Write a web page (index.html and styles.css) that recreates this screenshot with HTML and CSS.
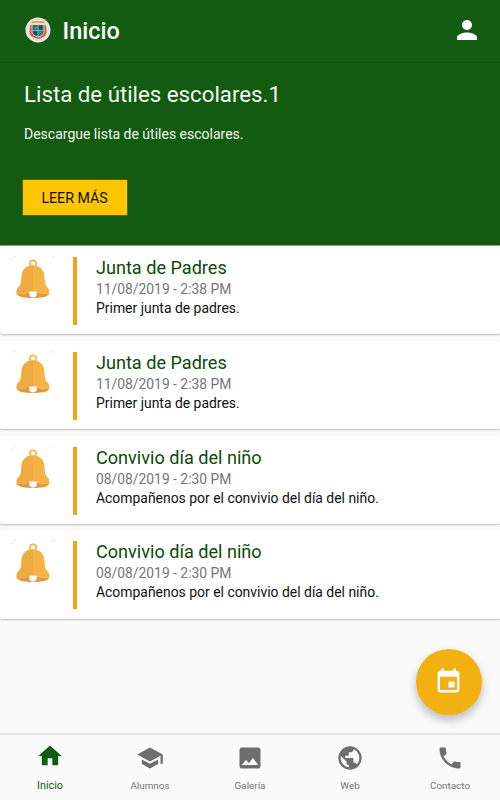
FILE: index.html
```html
<!DOCTYPE html>
<html lang="es">
<head>
    <meta charset="UTF-8">
    <meta name="viewport" content="width=device-width, initial-scale=1.0">
    <title>Inicio</title>
    <link rel="stylesheet" href="styles.css">
</head>
<body>
    <svg class="symbols" aria-hidden="true">
        <symbol id="bell" viewBox="-6 -4 44 44">
            <path d="M-6 1.500l3-2.500M-2.500-2.500h2.500M35.500-2.500h2v1.500" fill="none" stroke="#ececec" stroke-width="1"/>
            <circle cx="17" cy="4.500" r="3.100" fill="none" stroke="#f2b84a" stroke-width="1.700"/>
            <path d="M1 35.500C5 33.500 29 33.500 33 35.500C30 40.200 4 40.200 1 35.500Z" fill="#e8963b"/>
            <path d="M17 6.500C10 6.500 6 11 5.600 17C5.100 24 5.200 26 1.800 29C.5 30.500.3 34 1 35.800C5 33 29 33 33 35.800C33.700 34 33.500 30.500 32.200 29C28.800 26 28.900 24 28.400 17C28 11 24 6.500 17 6.500Z" fill="#f5b345"/>
            <path d="M17 6.500C10 6.500 6 11 5.600 17C5.100 24 5.200 26 1.800 29C.5 30.500.3 34 1 35.800C5 34.200 11 33.700 17 33.700Z" fill="#f0ab40"/>
            <path d="M13.300 32.600h7.400v2.400a3.700 3.500 0 0 1-7.400 0z" fill="#fff"/>
        </symbol>
    </svg>

    <header class="toolbar">
        <svg class="logo" viewBox="0 0 26 26">
            <circle cx="13" cy="13" r="12.500" fill="#e9ebe7"/>
            <circle cx="13" cy="13" r="10.500" fill="none" stroke="#c9cdca" stroke-width="1" stroke-dasharray="1 1.500"/>
            <path d="M5 8h16l.5 6c0 5-3 7-8.500 8c-5.500-1-8.500-3-8.500-8z" fill="#ef5326"/>
            <path d="M6.500 5.500q6.500-1.500 13 0" fill="none" stroke="#f5a04d" stroke-width="2"/>
            <path d="M7 7.500h12v7c0 3.500-3 4.500-6 5.500c-3-1-6-2-6-5.500z" fill="#23658c" stroke="#d3dfcf" stroke-width="1"/>
            <path d="M13 8v11M8 13.500h10" stroke="#b1cdbc" stroke-width=".7"/>
            <path d="M9 9.500h3v3h-3zM14 14.500h3v3h-3z" fill="#3d8c63"/>
            <path d="M14 9.500h3v3h-3zM9 14.500h3v3h-3z" fill="#12447a"/>
        </svg>
        <h1>Inicio</h1>
        <svg class="user" viewBox="0 0 24 24"><path d="M12 12c2.210 0 4-1.790 4-4s-1.790-4-4-4-4 1.790-4 4 1.790 4 4 4zm0 2c-2.670 0-8 1.340-8 4v2h16v-2c0-2.660-5.330-4-8-4z"/></svg>
    </header>

    <section class="banner">
        <h2>Lista de útiles escolares.1</h2>
        <p>Descargue lista de útiles escolares.</p>
        <button type="button">LEER MÁS</button>
    </section>

    <main class="list">
        <article class="card">
            <div class="thumb"><svg class="bell"><use href="#bell"/></svg></div>
            <div class="info">
                <h3>Junta de Padres</h3>
                <time>11/08/2019 - 2:38 PM</time>
                <p>Primer junta de padres.</p>
            </div>
        </article>
        <article class="card">
            <div class="thumb"><svg class="bell"><use href="#bell"/></svg></div>
            <div class="info">
                <h3>Junta de Padres</h3>
                <time>11/08/2019 - 2:38 PM</time>
                <p>Primer junta de padres.</p>
            </div>
        </article>
        <article class="card">
            <div class="thumb"><svg class="bell"><use href="#bell"/></svg></div>
            <div class="info">
                <h3>Convivio día del niño</h3>
                <time>08/08/2019 - 2:30 PM</time>
                <p>Acompañenos por el convivio del día del niño.</p>
            </div>
        </article>
        <article class="card">
            <div class="thumb"><svg class="bell"><use href="#bell"/></svg></div>
            <div class="info">
                <h3>Convivio día del niño</h3>
                <time>08/08/2019 - 2:30 PM</time>
                <p>Acompañenos por el convivio del día del niño.</p>
            </div>
        </article>
    </main>

    <button type="button" class="fab" aria-label="Calendario">
        <svg viewBox="0 0 24 24"><path d="M17 12h-5v5h5v-5zM16 1v2H8V1H6v2H5c-1.110 0-1.990.9-1.990 2L3 19c0 1.100.89 2 2 2h14c1.100 0 2-.9 2-2V5c0-1.100-.9-2-2-2h-1V1h-2zm3 18H5V8h14v11z"/></svg>
    </button>

    <nav class="tabs">
        <a class="tab active">
            <svg viewBox="0 0 24 24"><path d="M10 20v-6h4v6h5v-8h3L12 3 2 12h3v8z"/></svg>
            <span>Inicio</span>
        </a>
        <a class="tab">
            <svg viewBox="0 0 24 24"><path d="M5 13.180v4L12 21l7-3.820v-4L12 17l-7-3.820zM12 3L1 9l11 6 9-4.910V17h2V9L12 3z"/></svg>
            <span>Alumnos</span>
        </a>
        <a class="tab">
            <svg viewBox="0 0 24 24"><path d="M21 19V5c0-1.100-.9-2-2-2H5c-1.100 0-2 .9-2 2v14c0 1.100.9 2 2 2h14c1.100 0 2-.9 2-2zM8.500 13.500l2.500 3.010L14.500 12l4.500 6H5l3.500-4.500z"/></svg>
            <span>Galería</span>
        </a>
        <a class="tab">
            <svg viewBox="0 0 24 24"><path d="M12 2C6.480 2 2 6.480 2 12s4.480 10 10 10 10-4.480 10-10S17.520 2 12 2zm-1 17.930c-3.950-.49-7-3.850-7-7.930 0-.62.08-1.210.21-1.790L9 15v1c0 1.100.9 2 2 2v1.930zm6.900-2.540c-.26-.81-1-1.390-1.900-1.390h-1v-3c0-.55-.45-1-1-1H8v-2h2c.55 0 1-.45 1-1V7h2c1.100 0 2-.9 2-2v-.41c2.930 1.190 5 4.060 5 7.410 0 2.080-.8 3.970-2.100 5.390z"/></svg>
            <span>Web</span>
        </a>
        <a class="tab">
            <svg viewBox="0 0 24 24"><path d="M6.620 10.790c1.440 2.830 3.760 5.140 6.590 6.590l2.200-2.200c.27-.27.67-.36 1.020-.24 1.120.37 2.330.57 3.570.57.55 0 1 .45 1 1V20c0 .55-.45 1-1 1-9.390 0-17-7.610-17-17 0-.55.45-1 1-1h3.500c.55 0 1 .45 1 1 0 1.250.2 2.450.57 3.570.11.35.03.74-.25 1.020l-2.200 2.200z"/></svg>
            <span>Contacto</span>
        </a>
    </nav>
</body>
</html>
```

FILE: styles.css
```css
* {
    box-sizing: border-box;
}

body {
    font-family: Roboto, sans-serif;
    margin: 0;
    height: 800px;
    display: flex;
    flex-direction: column;
    overflow: hidden;
    background: #fafafa;
    color: #111;
}

h1, h2, h3, p {
    margin: 0;
    font-weight: 400;
}

button {
    font-family: inherit;
    border: none;
    padding: 0;
}

.symbols {
    display: none;
}

.toolbar {
    display: flex;
    align-items: center;
    height: 63px;
    padding: 0 18px 3px 25px;
    background: #125b10;
    border-bottom: 1px solid #105410;
    color: white;
}

.logo {
    width: 26px;
    height: 26px;
    margin-right: 11.500px;
}

.toolbar h1 {
    font-size: 23.500px;
    font-weight: 500;
    line-height: 28px;
    padding-top: 2px;
}

.user {
    width: 30px;
    height: 30px;
    margin-left: auto;
    fill: white;
}

.banner {
    height: 183px;
    padding: 17px 24px 0;
    background: #125b10;
    border-bottom: 1px solid #85a883;
    color: #f5f8f5;
}

.banner h2 {
    font-size: 22.250px;
    line-height: 28px;
}

.banner p {
    margin-top: 17px;
    font-size: 14px;
    line-height: 18px;
}

.banner button {
    display: block;
    width: 104px;
    height: 35px;
    margin: 37px 0 0 -1.500px;
    background: #ffc600;
    color: #111;
    font-size: 14.200px;
    box-shadow: 0 0 1px #ffc600;
}

.list {
    display: flex;
    flex-direction: column;
    gap: 6.500px;
}

.card {
    display: flex;
    height: 88.300px;
    padding: 11px 0 0 10px;
    background: white;
    border-radius: 2px;
    box-shadow: 0 1px 2px rgba(0, 0, 0, 0.25);
}

.thumb {
    width: 67px;
    height: 68px;
    border-right: 4px solid #f2a51a;
}

.bell {
    display: block;
    width: 44px;
    height: 44px;
    margin-top: -2px;
}

.info {
    padding-left: 19px;
}

.info h3 {
    color: #0b4a0b;
    font-size: 18.100px;
    line-height: 22px;
}

.info time {
    display: block;
    color: #757575;
    font-size: 13.850px;
    line-height: 20px;
}

.info p {
    font-size: 13.930px;
    line-height: 19px;
}

.fab {
    position: absolute;
    right: 18.500px;
    bottom: 85.500px;
    display: flex;
    align-items: center;
    justify-content: center;
    width: 66px;
    height: 66px;
    border-radius: 50%;
    background: #f3b011;
    box-shadow: 0 5px 10px rgba(0, 0, 0, 0.25);
}

.fab svg {
    width: 29px;
    height: 29px;
    fill: white;
}

.tabs {
    display: flex;
    height: 67px;
    margin-top: auto;
    border-top: 2px solid #e8e8e8;
    z-index: 1;
    background: #fafafa;
}

.tab {
    flex: 1;
    display: flex;
    flex-direction: column;
    align-items: center;
    padding-top: 9px;
    color: #737373;
    font-size: 9.900px;
    line-height: 14px;
}

.tab svg {
    width: 28px;
    height: 28px;
    margin-bottom: 7px;
    fill: #6e6e6e;
}

.tab.active {
    padding-top: 7px;
    color: #125b10;
    font-size: 10.800px;
}

.tab.active svg {
    margin-bottom: 9px;
    fill: #125b10;
}
```
